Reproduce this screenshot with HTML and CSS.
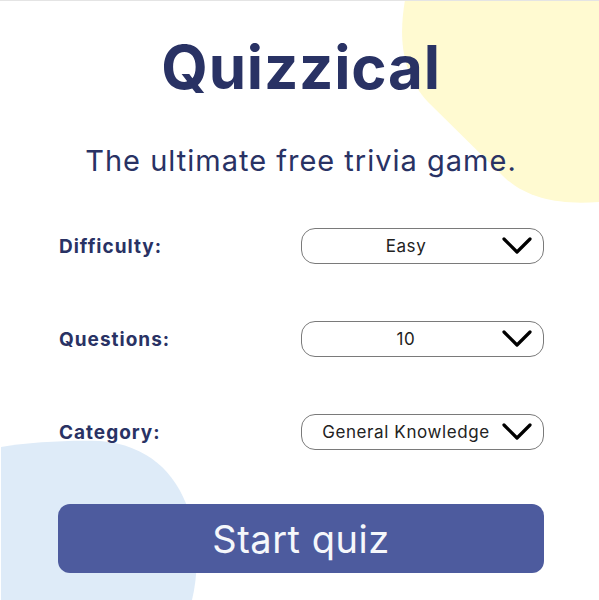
FILE: index.html
```html
<!DOCTYPE html>
<html>
<head>
<meta charset="utf-8">
<link rel="stylesheet" href="styles.css">
</head>
<body>
<div class="screen">
  <svg class="blob blob-yellow" width="197" height="206" viewBox="402 0 197 206" aria-hidden="true">
    <path d="M405,0 C400,30 398,70 428,102 L505,178 C528,199 560,205 599,202 L599,0 Z" fill="#FFFAD1"/>
  </svg>
  <svg class="blob blob-blue" width="200" height="162" viewBox="0 438 200 162" aria-hidden="true">
    <path d="M1,447 C30,442 70,440 100,441 C150,445 178,475 190,515 C199,545 198,575 192,600 L1,600 Z" fill="#DEEBF8"/>
  </svg>
  <main class="content">
    <h1 class="title">Quizzical</h1>
    <p class="subtitle">The ultimate free trivia game.</p>
    <div class="form">
      <div class="row">
        <span class="label">Difficulty:</span>
        <div class="select"><span class="value">Easy</span><svg class="chev" width="30" height="18" viewBox="0 0 30 18"><path d="M2,2 L15,15 L28,2" fill="none" stroke="#000" stroke-width="3.2" stroke-linecap="round" stroke-linejoin="round"/></svg></div>
      </div>
      <div class="row">
        <span class="label">Questions:</span>
        <div class="select"><span class="value">10</span><svg class="chev" width="30" height="18" viewBox="0 0 30 18"><path d="M2,2 L15,15 L28,2" fill="none" stroke="#000" stroke-width="3.2" stroke-linecap="round" stroke-linejoin="round"/></svg></div>
      </div>
      <div class="row">
        <span class="label">Category:</span>
        <div class="select"><span class="value">General Knowledge</span><svg class="chev" width="30" height="18" viewBox="0 0 30 18"><path d="M2,2 L15,15 L28,2" fill="none" stroke="#000" stroke-width="3.2" stroke-linecap="round" stroke-linejoin="round"/></svg></div>
      </div>
    </div>
    <button class="start">Start quiz</button>
  </main>
</div>
</body>
</html>
```

FILE: styles.css
```css
* { box-sizing: border-box; }
html, body { margin: 0; padding: 0; background: #fff; }
body { font-family: "Inter", "Liberation Sans", sans-serif; }

.screen {
  position: relative;
  width: 599px;
  height: 600px;
  overflow: hidden;
  border-top: 1px solid #e4e4e4;
}

.blob { position: absolute; display: block; }
.blob-yellow { top: -1px; right: 0; }
.blob-blue { left: 0; bottom: 0; }

.content {
  position: relative;
  display: flex;
  flex-direction: column;
  align-items: center;
  padding: 0 55px 0 58px;
}

.title {
  margin: 30px 0 0;
  font-size: 60px;
  line-height: 72px;
  font-weight: 700;
  color: #293264;
  letter-spacing: 0.8px;
}

.subtitle {
  margin: 40px 0 0;
  font-size: 29px;
  line-height: 36px;
  font-weight: 400;
  color: #293264;
  letter-spacing: 1px;
}

.form {
  width: 100%;
  display: flex;
  flex-direction: column;
  gap: 57px;
  margin-top: 49px;
  padding-left: 1px;
}

.row {
  display: flex;
  align-items: center;
  justify-content: space-between;
}

.label {
  font-size: 19px;
  font-weight: 700;
  color: #293264;
  letter-spacing: 1px;
}

.select {
  width: 243px;
  height: 36px;
  border: 1px solid #7a7a7a;
  border-radius: 14px;
  display: flex;
  align-items: center;
  padding: 0 11px 0 12px;
  color: #222;
}

.value {
  flex: 1;
  text-align: center;
  font-size: 17px;
  letter-spacing: 0.6px;
  white-space: nowrap;
}

.chev { flex: none; margin-left: 4px; }

.start {
  margin-top: 54px;
  width: 486px;
  height: 69px;
  border: none;
  border-radius: 12px;
  background: #4D5B9E;
  color: #F5F7FB;
  font-family: inherit;
  font-size: 38px;
  font-weight: 400;
  letter-spacing: 0.5px;
}
```
